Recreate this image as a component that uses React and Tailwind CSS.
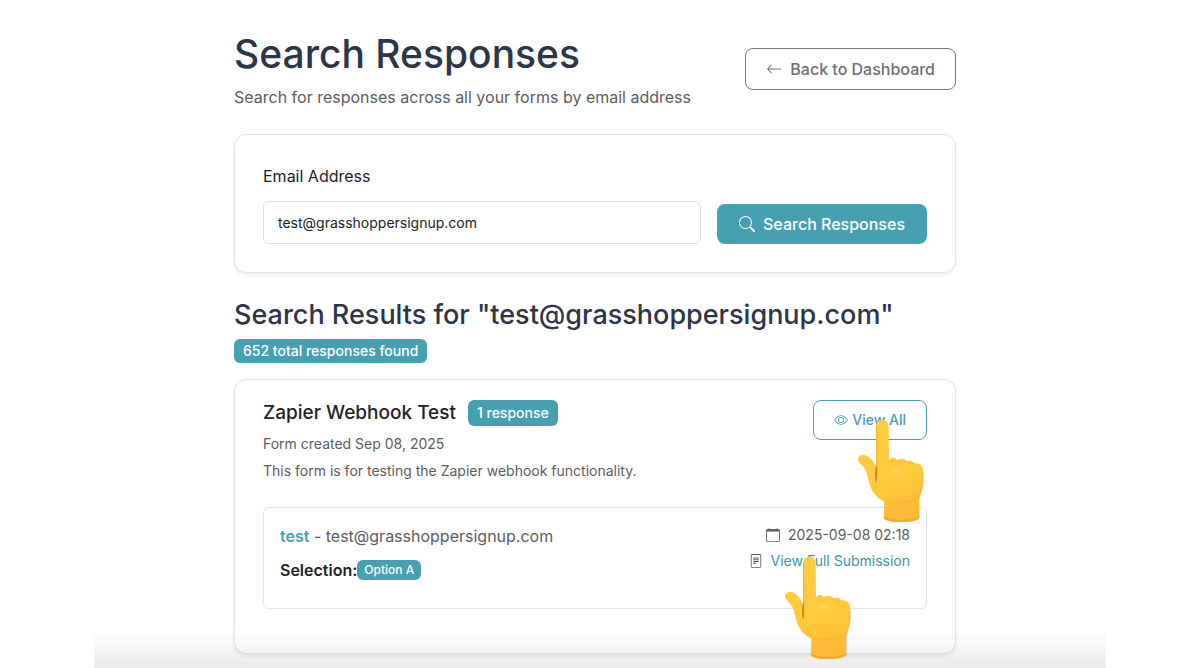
import React from "react";
import { BsArrowLeft, BsSearch, BsEye, BsCalendar, BsFileText } from "react-icons/bs";

function PointingHand({ id }) {
  const skin = `${id}-skin`;
  const glow = `${id}-glow`;
  const outline =
    "M54 20C54 7 62 0 73 0C84 0 92 7 92 20L93 122C98 112 110 110 117 121C125 114 141 115 147 125C155 119 163 122 168 130C186 128 196 138 196 156C198 182 196 204 186 228C182 243 185 268 184 292C180 303 158 306 130 306C104 306 82 304 77 293L79 244C62 238 48 224 39 204C29 180 29 160 20 146C12 134 2 130 0 118C0 104 20 102 31 110C43 118 50 130 54 142Z";
  return (
    <svg viewBox="0 0 198 306" className="h-[102px] w-[66px]" aria-hidden="true">
      <defs>
        <linearGradient id={skin} x1="0" y1="0" x2="0.2" y2="1">
          <stop offset="0" stopColor="#ffcd40" />
          <stop offset="0.7" stopColor="#ffc93c" />
          <stop offset="1" stopColor="#fdba38" />
        </linearGradient>
        <radialGradient id={glow}>
          <stop offset="0" stopColor="#ffdc63" />
          <stop offset="1" stopColor="#ffcb3e" stopOpacity="0" />
        </radialGradient>
      </defs>
      <path d={outline} fill={`url(#${skin})`} />
      <ellipse cx="116" cy="150" rx="40" ry="22" fill={`url(#${glow})`} />
      <path d="M53 138C50 160 50 176 55 190C58 176 58 156 57 136Z" fill="#c98a1c" />
      <path d="M56 20L57 140" stroke="#f0b735" strokeWidth="3" fill="none" />
      <path d="M94 121C100 127 110 128 117 121C126 128 139 130 147 125C153 131 162 133 168 130" stroke="#f3b535" strokeWidth="2" fill="none" strokeLinecap="round" />
      <path d="M194 165C195 195 190 214 183 230C168 246 140 252 80 246" stroke="#f2a52c" strokeWidth="5" fill="none" opacity="0.3" />
      <path d="M79 290C92 301 164 304 184 289L184 293C180 303 158 306 130 306C104 306 82 304 77 293Z" fill="#ea9a2a" opacity="0.55" />
    </svg>
  );
}

const card = "rounded-xl border border-[#e2e4e5] bg-white shadow-[0_2px_4px_rgba(0,0,0,0.08)]";
const badge = "rounded-md bg-[#479fb2] text-white";

export default function App() {
  return (
    <div className="relative mx-auto min-h-screen max-w-[1012px] bg-white px-4 pt-7 pb-[15px] font-['Inter',sans-serif] text-[#202326] md:pr-[150px] md:pl-[140px]">
      <header className="flex items-start justify-between gap-4">
        <div>
          <h1 className="text-[39px] leading-[52px] font-medium text-[#2d3548]">Search Responses</h1>
          <p className="mt-[3px] text-base leading-7 text-[#5b5d60]">
            Search for responses across all your forms by email address
          </p>
        </div>
        <a
          href="#dashboard"
          className="mt-5 flex h-[42px] shrink-0 items-center gap-2 rounded-lg border border-[#75787c] px-5 text-base font-medium text-[#6c7075]"
        >
          <BsArrowLeft className="size-4" />
          Back to Dashboard
        </a>
      </header>

      <main>
        <form className={`${card} mt-[23px] px-7 py-7`} onSubmit={(e) => e.preventDefault()}>
          <label htmlFor="email" className="block text-base leading-[26px]">
            Email Address
          </label>
          <div className="mt-3 flex items-end gap-4">
            <input
              id="email"
              type="email"
              defaultValue="test@grasshoppersignup.com"
              className="h-[43px] min-w-0 flex-1 rounded-md border border-[#dee1e3] px-3.5 text-sm"
            />
            <button
              type="submit"
              className="flex h-10 shrink-0 items-center gap-2 rounded-lg bg-[#479fb2] px-[22px] text-base font-medium text-white"
            >
              <BsSearch className="size-4" />
              Search Responses
            </button>
          </div>
        </form>

        <h2 className="mt-6 text-[27px] leading-9 font-medium text-[#2d3548]">
          Search Results for "test@grasshoppersignup.com"
        </h2>
        <p className={`${badge} mt-1.5 w-fit px-[9px] text-sm leading-6 font-medium`}>652 total responses found</p>

        <section className={`${card} mt-4 px-7 pt-5 pb-11`}>
          <div className="flex items-start justify-between gap-4">
            <div>
              <h3 className="flex items-center gap-3 text-[19px] leading-[26px] font-medium">
                Zapier Webhook Test
                <span className={`${badge} px-[9px] text-sm leading-[26px] font-medium`}>1 response</span>
              </h3>
              <p className="mt-2 text-sm leading-5 text-[#5b5d60]">Form created Sep 08, 2025</p>
              <p className="mt-[7px] text-sm leading-5 text-[#5b5d60]">
                This form is for testing the Zapier webhook functionality.
              </p>
            </div>
            <div className="relative shrink-0">
              <a
                href="#responses"
                className="flex h-10 items-center gap-1 rounded-lg border border-[#479fb2] px-5 text-sm font-medium text-[#479fb2]"
              >
                <BsEye className="size-3.5" />
                View All
              </a>
              <div className="pointer-events-none absolute top-5 right-[3px] z-10">
                <PointingHand id="all" />
              </div>
            </div>
          </div>

          <article className="mt-[26px] flex justify-between gap-4 rounded-md border border-[#e2e4e5] px-4 pt-3.5 pb-6">
            <div>
              <p className="text-base leading-7 text-[#5b5d60]">
                <strong className="font-semibold text-[#479fb2]">test</strong> - test@grasshoppersignup.com
              </p>
              <p className="mt-1.5 flex items-center text-base leading-7 font-semibold">
                Selection:
                <span className={`${badge} px-[7px] text-xs leading-5 font-medium`}>Option A</span>
              </p>
            </div>
            <div className="flex flex-col items-end text-sm leading-[26px] text-[#5b5d60]">
              <p className="flex items-center gap-2">
                <BsCalendar className="size-3.5" />
                2025-09-08 02:18
              </p>
              <div className="relative flex items-center gap-2">
                <BsFileText className="size-3.5" />
                <a href="#submission" className="text-[#3d95a9]">
                  View Full Submission
                </a>
                <div className="pointer-events-none absolute top-[9px] right-[59px] z-20">
                  <PointingHand id="full" />
                </div>
              </div>
            </div>
          </article>
        </section>
      </main>
      <div className="pointer-events-none absolute inset-x-0 bottom-0 h-10 bg-linear-to-b from-black/0 to-black/8" />
    </div>
  );
}
